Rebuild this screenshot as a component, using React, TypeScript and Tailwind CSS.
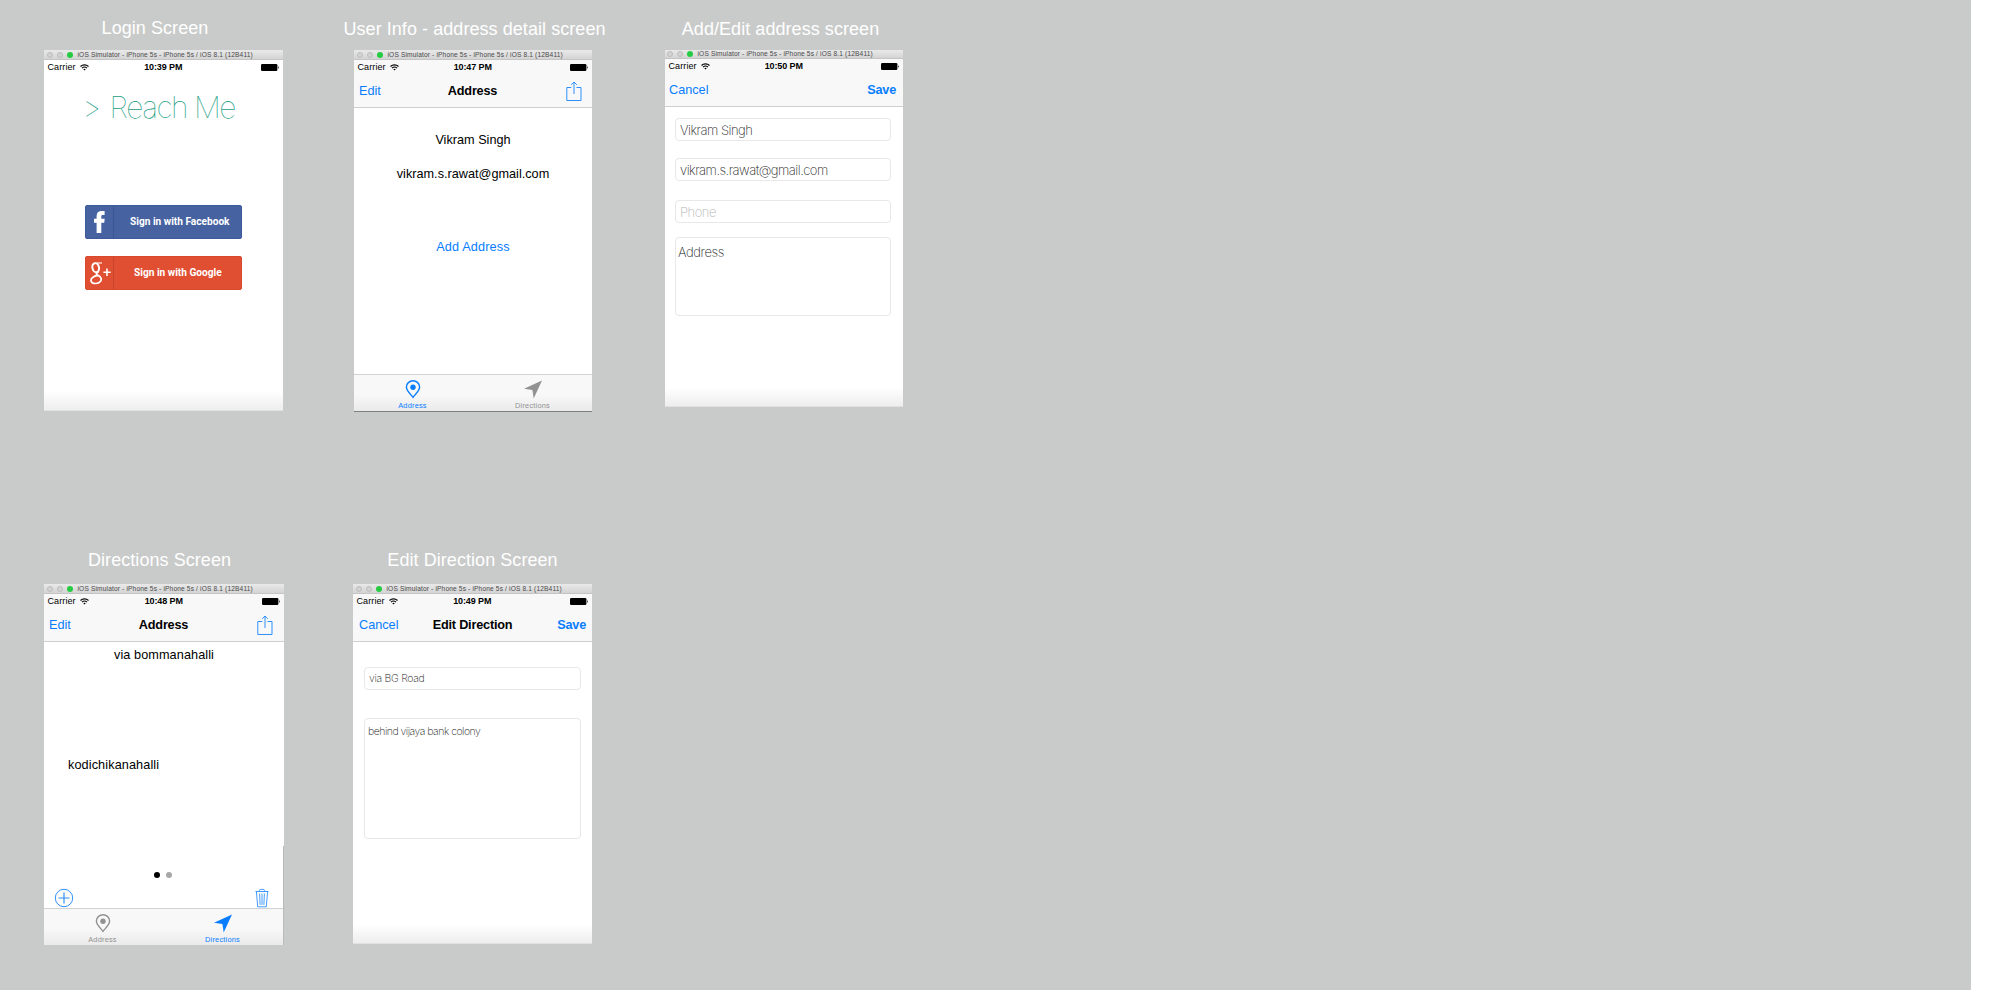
import React from "react";

const TitleBar = ({ short = false }: { short?: boolean }) => (
  <div
    className={`${short ? "h-[9px]" : "h-[10px]"} flex shrink-0 items-center border-b border-[#c4c4c4] bg-linear-to-b from-[#e9e9e9] to-[#d4d4d4] ${short ? "pb-px pl-[2px]" : "pl-[3px]"}`}
  >
    <i className="mr-1 size-[6px] shrink-0 rounded-full border-[0.5px] border-[#bdbdbd] bg-[#d3d3d3]" />
    <i className="mr-1 size-[6px] shrink-0 rounded-full border-[0.5px] border-[#bdbdbd] bg-[#d3d3d3]" />
    <i className="mr-1 size-[6px] shrink-0 rounded-full bg-[#25cb41]" />
    <span className="ml-[0.5px] text-[6.6px] leading-[8px] tracking-[0.15px] whitespace-nowrap text-[#4a4a4a]">
      iOS Simulator - iPhone 5s - iPhone 5s / iOS 8.1 (12B411)
    </span>
  </div>
);

const StatusBar = ({ time }: { time: string }) => (
  <div className="grid h-[15px] shrink-0 grid-cols-[1fr_auto_1fr] items-center pr-[4px] pl-[3.5px] text-[9px] leading-[15px] text-black">
    <div className="flex items-center gap-[4px]">
      <span className="tracking-[0.1px]">Carrier</span>
      <svg width="9" height="7" viewBox="0 0 9 7" fill="none" stroke="#000" strokeWidth="1.1">
        <path d="M0.5 2.5a5.8 5.8 0 0 1 8 0" />
        <path d="M2 4.1a3.7 3.7 0 0 1 5 0" />
        <path d="M3.3 5.3a1.9 1.9 0 0 1 2.4 0L4.5 6.6z" fill="#000" stroke="none" />
      </svg>
    </div>
    <span className="font-bold tracking-[-0.1px]">{time}</span>
    <svg className="justify-self-end" width="18" height="7" viewBox="0 0 18 7">
      <rect x="0" y="0" width="16.4" height="7" rx="1.2" fill="#000" />
      <path d="M17 2.2c.9.4.9 2.2 0 2.6z" fill="#000" />
    </svg>
  </div>
);

const ShareIcon = () => (
  <svg width="16" height="21" viewBox="0 0 16 21" fill="none" stroke="#2f90fb" strokeWidth="1">
    <path d="M5.3 6.5H0.8v13h14.2v-13h-4.5" />
    <path d="M8 13V1.2M5.2 3.8L8 1l2.8 2.8" />
  </svg>
);

const NavBar = ({
  left,
  title = "",
  right,
  className,
}: {
  left: string;
  title?: string;
  right: React.ReactNode;
  className: string;
}) => (
  <div
    className={`grid h-[33px] shrink-0 grid-cols-[1fr_auto_1fr] items-center border-b border-[#cfcfcf] text-[12.7px] leading-[33px] ${className}`}
  >
    <span className="text-[#087dff]">{left}</span>
    <span className="font-bold tracking-[-0.2px] text-black">{title}</span>
    <span className="justify-self-end font-bold tracking-[-0.2px] text-[#087dff]">{right}</span>
  </div>
);

const PinIcon = () => (
  <svg width="16" height="19" viewBox="0 0 16 19">
    <path
      d="M8 17.4C6 14.7 1.4 10.6 1.4 7a6.6 6.2 0 0 1 13.2 0C14.6 10.6 10 14.7 8 17.4z"
      fill="none"
      stroke="currentColor"
      strokeWidth="1.4"
    />
    <circle cx="8" cy="7.3" r="2.7" fill="currentColor" />
  </svg>
);

const ArrowIcon = () => (
  <svg width="18" height="19" viewBox="0 0 18 19">
    <path d="M18 0.6L0 8.8l8.4 1.3 1.3 8.4z" fill="currentColor" />
  </svg>
);

const TabBar = ({ active }: { active: "address" | "directions" }) => (
  <div className="mt-auto grid h-[37px] shrink-0 grid-cols-[117px_123px] border-t border-[#d2d3d4] bg-linear-to-b from-[#f8f8f8] from-55% to-[#eaeaea] text-[7.4px] leading-[8px]">
    <div
      className={`flex flex-col items-center pt-[5px] ${active === "address" ? "text-[#087dff]" : "text-[#929292]"}`}
    >
      <PinIcon />
      <span className="mt-[3px] tracking-[0.2px]">Address</span>
    </div>
    <div
      className={`flex flex-col items-center pt-[5px] ${active === "directions" ? "text-[#087dff]" : "text-[#929292]"}`}
    >
      <ArrowIcon />
      <span className="mt-[3px] tracking-[0.2px]">Directions</span>
    </div>
  </div>
);

const BottomShade = () => (
  <div className="mt-auto h-5 shrink-0 border-b border-[#e0e2e2] bg-linear-to-b from-white to-[#eeeeee]" />
);

const Field = ({ className, children }: { className: string; children: string }) => (
  <div
    className={`shrink-0 rounded-[4px] border border-[#e8e8e8] bg-white font-[Inter] font-extralight whitespace-nowrap ${className}`}
  >
    {children}
  </div>
);

const Caption = ({ className, children }: { className: string; children: string }) => (
  <h2
    className={`text-center text-[18px] leading-5 tracking-[0.06px] whitespace-nowrap text-white ${className}`}
  >
    {children}
  </h2>
);

const LoginScreen = () => (
  <section className="ml-[44px] w-[239px]">
    <Caption className="h-[50px] pt-[18px] pr-[17px]">Login Screen</Caption>
    <div className="flex h-[361px] flex-col bg-white">
      <TitleBar />
      <StatusBar time="10:39 PM" />
      <h1 className="mt-[14px] ml-[38px] h-9 font-[Inter] text-[30px] leading-9 font-thin tracking-[-1.5px] whitespace-nowrap text-[#1a9c83]">
        &gt; <span className="ml-[3px]">Reach Me</span>
      </h1>
      <button className="mt-[80px] ml-[41px] flex h-[34px] w-[157px] shrink-0 rounded-[2px] border border-[#3c5a9c] bg-[#4662a1] text-white">
        <span className="flex h-full w-7 justify-center border-r border-[#3c5590] pt-[5px]">
          <svg width="11" height="22" viewBox="0 0 11 22" fill="currentColor">
            <path d="M2.6 22V11.8H0V7.8h2.6V5.2C2.6 1.9 4.4 0 7.6 0H10.6v4H8.8C7.6 4 7.3 4.5 7.3 5.5v2.3h3.4l-.5 4H7.3V22z" />
          </svg>
        </span>
        <span className="ml-[16px] w-[108px] shrink-0 origin-left scale-x-92 text-left font-[Roboto] text-[11px] leading-8 font-bold whitespace-nowrap">
          Sign in with Facebook
        </span>
      </button>
      <button className="mt-[17px] ml-[41px] flex h-[34px] w-[157px] shrink-0 rounded-[2px] border border-[#d9482c] bg-[#e04f32] text-white">
        <span className="flex h-full w-7 border-r border-[#c8452d] pt-[5px] pl-[4px]">
          <svg width="21" height="23" viewBox="0 0 21 23" fill="none" stroke="currentColor">
            <ellipse cx="5.7" cy="5.7" rx="3.3" ry="4.6" strokeWidth="2" transform="rotate(-12 5.7 5.7)" />
            <path d="M6.5 1h5.5" strokeWidth="1.1" />
            <path d="M8.5 9.5C6 11.5 5.5 12 8 13.6" strokeWidth="1.8" />
            <path d="M8 13.4c3.5 1.4 3.7 4 2.6 5.8C9 22 2.5 22.4 1.2 19.4c-.9-2.6 2-5.4 6.8-6z" strokeWidth="1.7" />
            <path d="M13.4 10.3h7.2M17 6.5v7.6" strokeWidth="1.6" />
          </svg>
        </span>
        <span className="ml-[20px] w-[96px] shrink-0 origin-left scale-x-92 text-left font-[Roboto] text-[11px] leading-8 font-bold whitespace-nowrap">
          Sign in with Google
        </span>
      </button>
      <BottomShade />
    </div>
  </section>
);

const UserInfoScreen = () => (
  <section className="ml-[71px] w-[238px]">
    <Caption className="-mx-4 h-[50px] pt-[19px] pl-[3px]">User Info - address detail screen</Caption>
    <div className="flex h-[362px] flex-col border-b border-[#7d7e7e] bg-white">
      <TitleBar />
      <div className="bg-[#f8f8f8]">
        <StatusBar time="10:47 PM" />
        <NavBar
          left="Edit"
          title="Address"
          right={<ShareIcon />}
          className="pr-[10px] pl-[9px] [&>span:first-child]:-ml-1"
        />
      </div>
      <div className="text-center text-[12.7px] leading-5 text-black">
        <p className="mt-[22px]">Vikram Singh</p>
        <p className="mt-[14px]">vikram.s.rawat@gmail.com</p>
        <p className="mt-[53px] tracking-[0.15px] text-[#087dff]">Add Address</p>
      </div>
      <TabBar active="address" />
    </div>
  </section>
);

const EditAddressScreen = () => (
  <section className="ml-[73px] w-[238px]">
    <Caption className="h-[50px] pt-[19px] pr-[7px]">Add/Edit address screen</Caption>
    <div className="relative flex h-[357px] flex-col bg-white">
      <TitleBar short />
      <div className="bg-[#f8f8f8]">
        <StatusBar time="10:50 PM" />
        <NavBar left="Cancel" right="Save" className="pr-[7px] pl-[4px]" />
      </div>
      {/* navigation title, nearly faded out mid-transition */}
      <span className="absolute top-[18px] left-[80px] text-[12.7px] leading-4 font-bold whitespace-nowrap text-black/[0.025]">
        Edit Address
      </span>
      <Field className="mt-[11px] ml-[10px] h-[23px] w-[216px] pl-[4px] text-[13px] leading-[22px] tracking-[-0.5px] text-[#222]">
        Vikram Singh
      </Field>
      <Field className="mt-[17px] ml-[10px] h-[23px] w-[216px] pl-[4px] text-[13px] leading-[22px] tracking-[-0.5px] text-[#222]">
        vikram.s.rawat@gmail.com
      </Field>
      <Field className="mt-[19px] ml-[10px] h-[23px] w-[216px] pl-[4px] text-[13px] leading-[22px] tracking-[-0.5px] text-[#b5b5b5]">
        Phone
      </Field>
      <Field className="mt-[14px] ml-[10px] h-[79px] w-[216px] pt-[3px] pl-[2px] text-[13px] leading-[22px] tracking-[-0.4px] text-[#222]">
        Address
      </Field>
      <BottomShade />
    </div>
  </section>
);

const DirectionsScreen = () => (
  <section className="ml-[44px] w-[240px]">
    <Caption className="h-[34px] pr-[9px]">Directions Screen</Caption>
    <div className="relative flex h-[361px] flex-col bg-white">
      <TitleBar />
      <div className="bg-[#f8f8f8]">
        <StatusBar time="10:48 PM" />
        <NavBar
          left="Edit"
          title="Address"
          right={<ShareIcon />}
          className="pr-[11px] pl-[10px] [&>span:first-child]:-ml-[5px]"
        />
      </div>
      <p className="mt-[3px] text-center text-[12.7px] leading-5 tracking-[0.08px] text-black">
        via bommanahalli
      </p>
      <p className="mt-[90px] ml-[24px] text-[12.7px] leading-5 tracking-[0.1px] text-black">
        kodichikanahalli
      </p>
      <div className="mt-[97px] ml-[110px] flex gap-[6px]">
        <i className="size-[6px] rounded-full bg-black" />
        <i className="size-[6px] rounded-full bg-[#a8a8a8]" />
      </div>
      <div className="mt-[10px] flex justify-between pr-[15px] pl-[10px] text-[#2f90fb]">
        <svg width="20" height="20" viewBox="0 0 20 20" fill="none" stroke="currentColor">
          <circle cx="10" cy="10" r="8.7" strokeWidth="1" />
          <path d="M4.5 10h11M10 4.5v11" strokeWidth="1.2" />
        </svg>
        <svg width="14" height="20" viewBox="0 0 14 20" fill="none" stroke="currentColor" strokeWidth="0.9">
          <path d="M.5 3.5h13M1.4 3.5l1.3 15.3h8.6l1.3-15.3M4 3.2C4 .7 10 .7 10 3.2" />
          <path d="M4.6 5.5l.5 11.3M7 5.5v11.3M9.4 5.5l-.5 11.3" />
        </svg>
      </div>
      <TabBar active="directions" />
      <i className="absolute right-0 bottom-0 h-[99px] w-px bg-[#b9bbbb]" />
    </div>
  </section>
);

const EditDirectionScreen = () => (
  <section className="ml-[69px] w-[239px]">
    <Caption className="h-[34px]">Edit Direction Screen</Caption>
    <div className="flex h-[360px] flex-col bg-white">
      <TitleBar />
      <div className="bg-[#f8f8f8]">
        <StatusBar time="10:49 PM" />
        <NavBar left="Cancel" title="Edit Direction" right="Save" className="pr-[6px] pl-[6px]" />
      </div>
      <Field className="mt-[25px] ml-[11px] h-[23px] w-[217px] pl-[4px] text-[10.5px] leading-[21px] tracking-[-0.3px] text-[#222]">
        via BG Road
      </Field>
      <Field className="mt-[28px] ml-[11px] h-[121px] w-[217px] pt-[2px] pl-[3px] text-[10.5px] leading-[21px] tracking-[-0.5px] text-[#222]">
        behind vijaya bank colony
      </Field>
      <BottomShade />
    </div>
  </section>
);

export default function App() {
  return (
    <div className="h-[1000px] w-[2000px] overflow-hidden bg-white font-['Liberation_Sans',sans-serif]">
      <main className="h-[990px] w-[1971px] bg-[#c9cbca]">
        <div className="flex h-[550px] items-start">
          <LoginScreen />
          <UserInfoScreen />
          <EditAddressScreen />
        </div>
        <div className="flex items-start">
          <DirectionsScreen />
          <EditDirectionScreen />
        </div>
      </main>
    </div>
  );
}
